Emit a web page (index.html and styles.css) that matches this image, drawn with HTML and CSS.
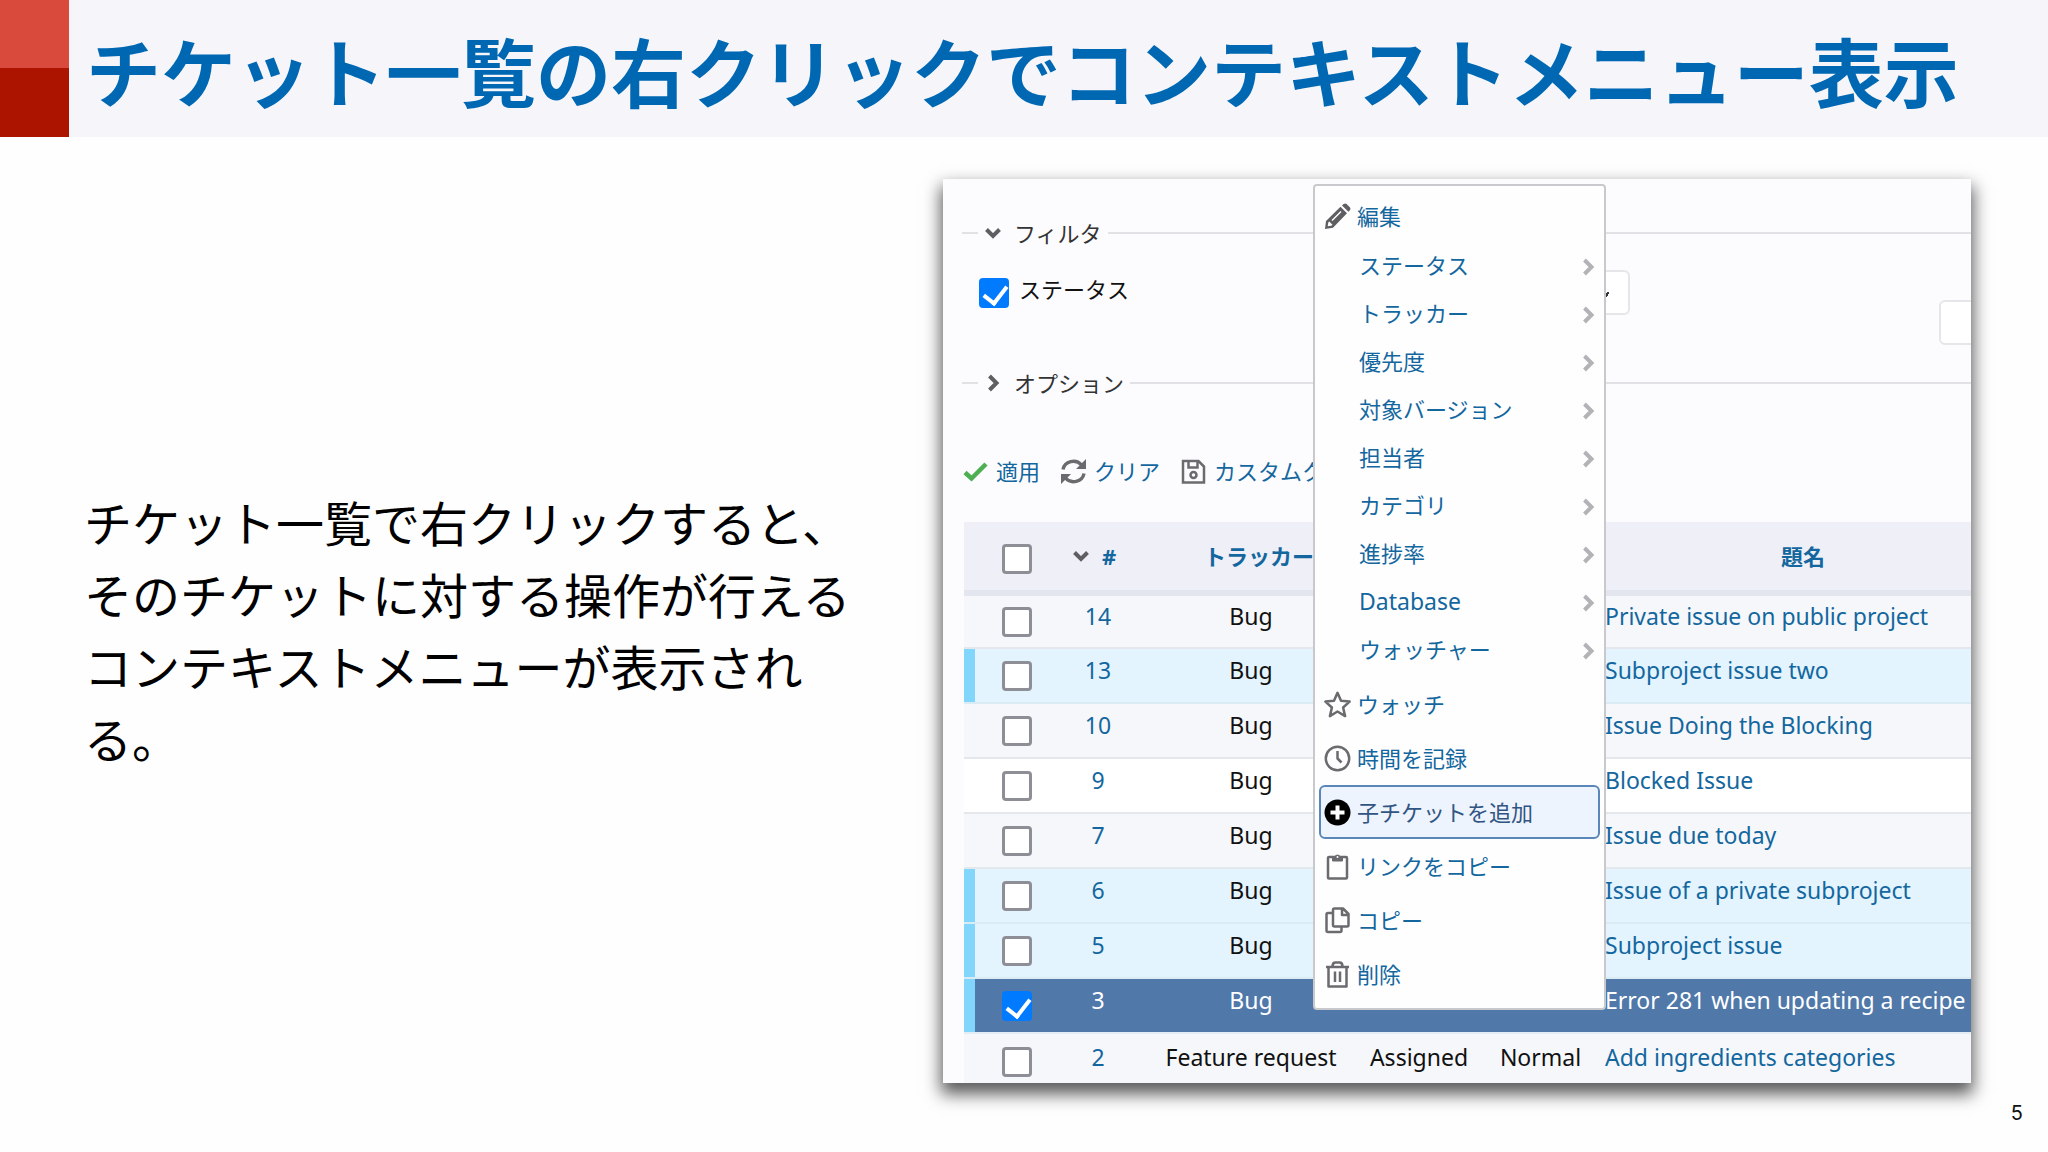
FILE: index.html
```html
<!DOCTYPE html>
<html lang="ja">
<head>
<meta charset="utf-8">
<meta name="viewport" content="width=device-width, initial-scale=1">
<title>チケット一覧の右クリックでコンテキストメニュー表示</title>
<link rel="stylesheet" href="styles.css">
</head>
<body>
<svg class="sprite" aria-hidden="true">
  <symbol id="chev-down" viewBox="0 0 18 18"><path d="M2.500 5.500 9 12l6.500-6.500" fill="none" stroke="currentColor" stroke-width="4"/></symbol>
  <symbol id="chev-right" viewBox="0 0 18 18"><path d="M5.500 2 12.500 9l-7 7" fill="none" stroke="currentColor" stroke-width="4"/></symbol>
</svg>
<div class="slide">
  <header class="slide-header">
    <div class="mark"></div>
    <h1>チケット一覧の右クリックでコンテキストメニュー表示</h1>
  </header>
  <main class="slide-body">
    <p class="lead">チケット一覧で右クリックすると、そのチケットに対する操作が行えるコンテキストメニューが表示される。</p>
    <section class="shot">
      <div class="group"><button type="button" class="legend"><svg class="chev"><use href="#chev-down"/></svg>フィルタ</button></div>
      <div class="filters">
        <input type="checkbox" class="box" id="f-status" checked><label for="f-status">ステータス</label>
        <select class="operator" aria-label="ステータス"></select>
        <input type="text" class="value" aria-label="値">
      </div>
      <div class="group"><button type="button" class="legend"><svg class="chev"><use href="#chev-right"/></svg>オプション</button></div>
      <div class="toolbar">
        <a href="#"><svg class="icon" viewBox="0 0 27 27"><path d="M3 14.500 9.500 20.500 24 6" fill="none" stroke="#4caf50" stroke-width="4.500"/></svg>適用</a>
        <a href="#"><svg class="icon" viewBox="0 0 27 27" fill="none" stroke="#6b6b6f" stroke-width="3.400"><path d="M3 11.500a10.500 9.800 0 0 1 18.500-4.500M24 15.500a10.500 9.800 0 0 1-18.500 4.500"/><path d="M26 1v10H16zM1 26V16h10z" fill="#6b6b6f" stroke="none"/></svg>クリア</a>
        <a href="#"><svg class="icon" viewBox="0 0 27 27" fill="none" stroke="#6b6b6f" stroke-width="2.500"><path d="M3 3h15.500l5.500 5.500v16H3zM8.500 3v6.500h9V3"/><circle cx="13.500" cy="17" r="3"/></svg>カスタムク</a>
      </div>
      <div class="list">
        <table>
          <colgroup><col class="c-check"><col class="c-id"><col class="c-tracker"><col class="c-status"><col class="c-priority"><col></colgroup>
          <thead><tr><th><input type="checkbox" class="box" aria-label="すべて選択"></th><th><a href="#" class="sort"><svg class="chev"><use href="#chev-down"/></svg>#</a></th><th class="indent"><a href="#">トラッカー</a></th><th></th><th></th><th><a href="#">題名</a></th></tr></thead>
          <tbody>
            <tr><td><input type="checkbox" class="box" aria-label="14"></td><td><a href="#">14</a></td><td>Bug</td><td></td><td></td><td><a href="#">Private issue on public project</a></td></tr>
            <tr class="sub"><td><input type="checkbox" class="box" aria-label="13"></td><td><a href="#">13</a></td><td>Bug</td><td></td><td></td><td><a href="#">Subproject issue two</a></td></tr>
            <tr><td><input type="checkbox" class="box" aria-label="10"></td><td><a href="#">10</a></td><td>Bug</td><td></td><td></td><td><a href="#">Issue Doing the Blocking</a></td></tr>
            <tr class="plain"><td><input type="checkbox" class="box" aria-label="9"></td><td><a href="#">9</a></td><td>Bug</td><td></td><td></td><td><a href="#">Blocked Issue</a></td></tr>
            <tr><td><input type="checkbox" class="box" aria-label="7"></td><td><a href="#">7</a></td><td>Bug</td><td></td><td></td><td><a href="#">Issue due today</a></td></tr>
            <tr class="sub"><td><input type="checkbox" class="box" aria-label="6"></td><td><a href="#">6</a></td><td>Bug</td><td></td><td></td><td><a href="#">Issue of a private subproject</a></td></tr>
            <tr class="sub"><td><input type="checkbox" class="box" aria-label="5"></td><td><a href="#">5</a></td><td>Bug</td><td></td><td></td><td><a href="#">Subproject issue</a></td></tr>
            <tr class="sub selected"><td><input type="checkbox" class="box" aria-label="3" checked></td><td><a href="#">3</a></td><td>Bug</td><td></td><td></td><td><a href="#">Error 281 when updating a recipe</a></td></tr>
            <tr class="last"><td><input type="checkbox" class="box" aria-label="2"></td><td><a href="#">2</a></td><td>Feature request</td><td>Assigned</td><td>Normal</td><td><a href="#">Add ingredients categories</a></td></tr>
          </tbody>
        </table>
      </div>
      <nav class="menu">
        <a href="#" class="item first"><svg class="icon" viewBox="0 0 27 27"><path fill="#5f5f63" fill-rule="evenodd" d="M1 26 2 18 16.500 3.800 23 10.300 9 24.800zM3.700 23.300 7.300 22.700 8.500 21.800 5.200 18.500 4.300 19.600zM7.500 17 16.500 8l1 1-9 9z"/><path fill="#5f5f63" d="m18 2.500 1.600-1.500q1.500-1.200 3 0l3.200 3.200q1.300 1.500 0 3L24.400 8.700z"/></svg>編集</a>
        <div class="folders">
          <a href="#">ステータス<svg class="chev"><use href="#chev-right"/></svg></a>
          <a href="#">トラッカー<svg class="chev"><use href="#chev-right"/></svg></a>
          <a href="#">優先度<svg class="chev"><use href="#chev-right"/></svg></a>
          <a href="#">対象バージョン<svg class="chev"><use href="#chev-right"/></svg></a>
          <a href="#">担当者<svg class="chev"><use href="#chev-right"/></svg></a>
          <a href="#">カテゴリ<svg class="chev"><use href="#chev-right"/></svg></a>
          <a href="#">進捗率<svg class="chev"><use href="#chev-right"/></svg></a>
          <a href="#" class="latin">Database<svg class="chev"><use href="#chev-right"/></svg></a>
          <a href="#">ウォッチャー<svg class="chev"><use href="#chev-right"/></svg></a>
        </div>
        <a href="#" class="item"><svg class="icon line" viewBox="0 0 27 27"><path d="m13.500 1.800 3.500 8 8.600.8-6.500 5.900 2 8.600-7.600-4.600-7.600 4.600 2-8.600-6.500-5.900 8.600-.8z"/></svg>ウォッチ</a>
        <a href="#" class="item"><svg class="icon line" viewBox="0 0 27 27"><circle cx="13.500" cy="13.500" r="11.700"/><path d="M13.500 6v7.500l4 4"/></svg>時間を記録</a>
        <a href="#" class="item active"><svg class="icon" viewBox="0 0 27 27"><circle cx="13.500" cy="13.500" r="13" fill="#000"/><path d="M13.500 6.500v14M6.500 13.500h14" stroke="#fff" stroke-width="4"/></svg>子チケットを追加</a>
        <a href="#" class="item"><svg class="icon line" viewBox="0 0 27 27"><rect x="4" y="4" width="19" height="21.500" rx="1"/><path fill="#6b6b6f" d="M8.500 8V4.500H11a2.500 2.500 0 0 1 5 0h2.500V8z" stroke-width="1"/><circle cx="13.500" cy="4" r="1" fill="#fff" stroke="none"/></svg>リンクをコピー</a>
        <a href="#" class="item"><svg class="icon line" viewBox="0 0 27 27"><path d="M9 6H4Q2.500 6 2.500 7.500v16Q2.500 25 4 25h12q1.500 0 1.500-1.500V20"/><path d="M10.500 1.500H19l5.500 5.500v11q0 1.500-1.500 1.500H10.500Q9 19.500 9 18V3q0-1.500 1.500-1.500zM18 1.500V8h6.500"/></svg>コピー</a>
        <a href="#" class="item"><svg class="icon line" viewBox="0 0 27 27"><path d="M2 6h23M4.500 6v19.500h18V6M8.500 5.500q0-4 3-4h4q3 0 3 4M11 10.500v10.500M16 10.500v10.500"/></svg>削除</a>
      </nav>
    </section>
  </main>
  <footer class="page-number">5</footer>
</div>
</body>
</html>
```
FILE: styles.css
```css
* { box-sizing: border-box; }

body {
  margin: 0;
  background: #fefefe;
  color: #111;
  font-family: "Noto Sans CJK JP", sans-serif;
}

a { color: #13679e; text-decoration: none; }

.sprite { display: none; }

.slide {
  min-height: 100vh;
  display: flex;
  flex-direction: column;
  overflow: hidden;
}

.slide-header {
  display: flex;
  background: #f5f5fa;
}

.mark {
  flex: none;
  width: 69px;
  background: linear-gradient(#da4a3c 50%, #ad1400 50%);
}

h1 {
  margin: 0;
  padding: 14px 0 11px 17px;
  color: #0068b3;
  font-size: 75px;
  line-height: 112px;
  font-weight: 700;
  white-space: nowrap;
}

.slide-body {
  display: grid;
  grid-template-columns: 785fr 1028fr;
  gap: 74px;
  align-items: center;
  padding: 42px 77px 0 84px;
}

.lead {
  margin: 0;
  padding-bottom: 4px;
  color: #000;
  font-size: 48px;
  line-height: 72px;
}

.shot {
  position: relative;
  display: flow-root;
  min-width: 0;
  padding: 38px 0 0 19px;
  background: #fcfcff;
  box-shadow: 0 9px 16px 2px rgba(0, 0, 0, 0.65);
  font-family: "Noto Sans", "Noto Sans CJK JP", sans-serif;
  font-size: 22px;
  line-height: 32px;
}

.group {
  display: flex;
  align-items: center;
  gap: 6px;
}

.group::before,
.group::after {
  content: "";
  height: 2px;
  background: #e2e2e6;
}

.group::before { width: 16px; }
.group::after { flex: 1; }

.legend {
  display: flex;
  align-items: center;
  gap: 12px;
  padding: 0;
  border: 0;
  background: none;
  color: #333;
  font: inherit;
}

.chev {
  flex: none;
  width: 18px;
  height: 18px;
  color: #5f5f63;
}

.filters {
  display: flex;
  align-items: flex-start;
  height: 118px;
  padding: 20px 0 0 17px;
  overflow: hidden;
}

.filters label {
  flex: none;
  width: 340px;
  padding-left: 10px;
  line-height: 40px;
}

.box {
  appearance: none;
  display: block;
  flex: none;
  width: 30px;
  height: 30px;
  margin: 0;
  border: 3px solid #8e8e96;
  border-radius: 4px;
  background: #fff;
}

.filters .box { margin-top: 9px; }

.box:checked {
  border: 0;
  background: #007aff;
}

.box:checked::before {
  content: "";
  display: block;
  width: 11px;
  height: 19px;
  margin: 3px 0 0 9px;
  border: solid #fff;
  border-width: 0 4px 4px 0;
  transform: rotate(38deg);
}

.operator,
.value {
  flex: none;
  height: 45px;
  border: 2px solid #e6e6ea;
  border-radius: 6px;
  background: #fff;
  color: #333;
  font: inherit;
}

.operator {
  appearance: none;
  width: 281px;
  margin-top: 1px;
  background: linear-gradient(120deg, transparent 45%, #333 45% 75%, transparent 75%) right 19px top 20px / 6px 5px no-repeat #fff;
}

.value { width: 120px; margin: 31px 0 0 309px; }

.toolbar {
  display: flex;
  gap: 20px;
  height: 123px;
  padding-top: 56px;
  overflow: hidden;
  white-space: nowrap;
}

.toolbar a {
  display: flex;
  align-items: center;
  height: 32px;
  gap: 7px;
}

.icon { flex: none; width: 27px; height: 27px; }

.line {
  fill: none;
  stroke: #6b6b6f;
  stroke-width: 2.5;
  stroke-linejoin: round;
}

.list { overflow: hidden; margin-left: 2px; }

table {
  width: calc(100% + 30px);
  border-collapse: collapse;
  table-layout: fixed;
  text-align: center;
}

.c-check { width: 92px; }
.c-id { width: 84px; }
.c-tracker { width: 222px; }
.c-status { width: 114px; }
.c-priority { width: 129px; }

th, td { padding: 0; white-space: nowrap; }

th {
  height: 71px;
  background: #efeff7;
  border-bottom: 6px solid #e3e6ef;
}

th.indent { padding-left: 16px; }

.sort {
  display: flex;
  align-items: center;
  justify-content: center;
  gap: 12px;
  padding-right: 8px;
}

td {
  height: 55px;
  padding-bottom: 12px;
  background: #f6f7fa;
  border-bottom: 2px solid #e4e8ec;
  font-size: 23px;
}

td:first-child { padding-bottom: 0; }
th:first-child { padding-top: 6px; }
td:last-child { text-align: left; }
td .box, th .box { margin-left: 38px; }

.plain td { background: #fff; }
.sub td { background: #e3f4fe; border-color: #dbebf4; }
.sub td:first-child { box-shadow: inset 11px 0 #82d5fb; }
.selected td { background: #5079aa; color: #fff; border-color: #e4ecf4; }
.selected a { color: #fff; }
.last td { height: 50px; padding-bottom: 4px; border-bottom: 0; }
.last td:first-child { padding: 6px 0 0; }

.menu {
  position: absolute;
  top: 5px;
  left: 370px;
  width: 293px;
  padding: 5px 4px 7px;
  border: 2px solid #c9c8cd;
  border-radius: 4px;
  background: #fefefe;
}

.item,
.folders a {
  display: flex;
  align-items: center;
}

.item {
  height: 54px;
  gap: 6px;
  padding-left: 3px;
  border: 2px solid transparent;
  border-radius: 6px;
}

.first { height: 50px; }

.active {
  border-color: #5b87b8;
  background: #edf4fd;
  color: #315583;
}

.folders { margin-bottom: 4px; }

.folders a {
  justify-content: space-between;
  height: 48px;
  padding: 0 3px 0 40px;
}

.folders .latin { font-size: 23px; }

.folders .chev { margin-top: 4px; color: #b3b2b6; }

.page-number {
  padding: 18px 25px 0;
  color: #111;
  font-family: Inter, sans-serif;
  font-size: 20px;
  line-height: 24px;
  text-align: right;
}
```
